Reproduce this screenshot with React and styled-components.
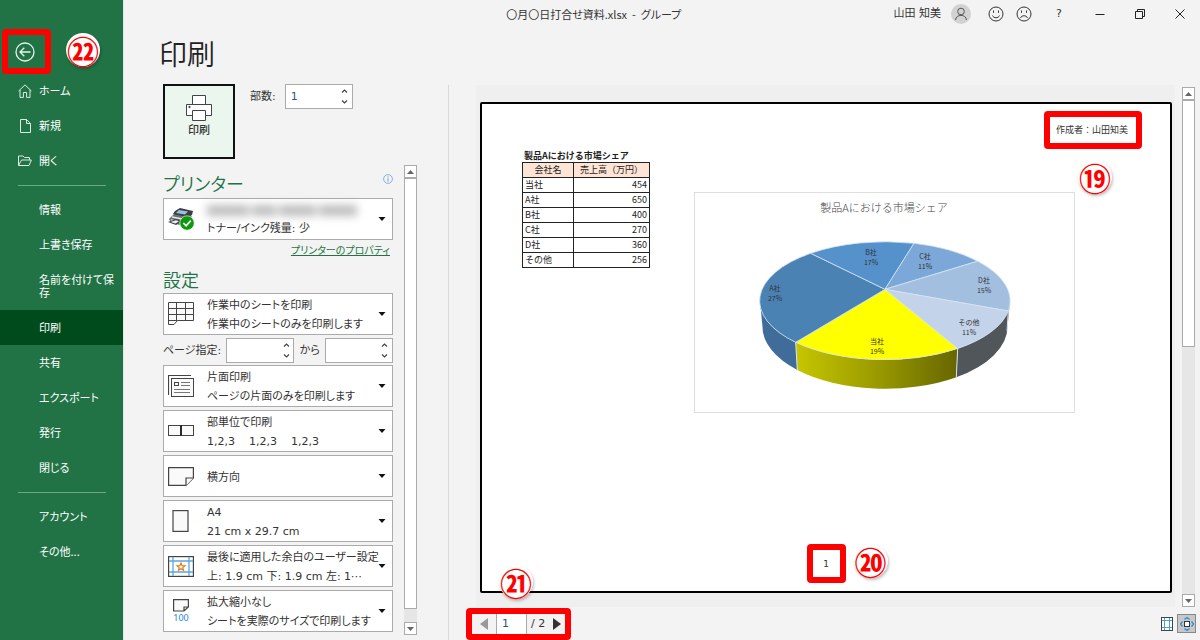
import React, { useState } from "react";
import styled, { createGlobalStyle, css } from "styled-components";

const backstageMenu = [
  { label: "情報" },
  { label: "上書き保存" },
  { label: "名前を付けて保存" },
  { label: "印刷", active: true },
  { label: "共有" },
  { label: "エクスポート" },
  { label: "発行" },
  { label: "閉じる" }
];

const sales = [
  { name: "当社", amount: 454 },
  { name: "A社", amount: 650 },
  { name: "B社", amount: 400 },
  { name: "C社", amount: 270 },
  { name: "D社", amount: 360 },
  { name: "その他", amount: 256 }
];

const slices = [
  { name: "当社", rate: "19%", fill: "#ffff00", from: [263.7, 156.5], to: [101.7, 150.3], x: 183, y: 152 },
  { name: "A社", rate: "27%", fill: "#4a82b4", from: [101.7, 150.3], to: [116.7, 61.3], x: 81, y: 99 },
  { name: "B社", rate: "17%", fill: "#5592cc", from: [116.7, 61.3], to: [220, 51.3], x: 177, y: 63 },
  { name: "C社", rate: "11%", fill: "#7ba7d9", from: [220, 51.3], to: [283.7, 69.2], x: 231, y: 67 },
  { name: "D社", rate: "15%", fill: "#a2bfe0", from: [283.7, 69.2], to: [314.3, 119], x: 290, y: 91 },
  { name: "その他", rate: "11%", fill: "#c3d3ea", from: [314.3, 119], to: [263.7, 156.5], x: 275, y: 133 }
];

function PieChart() {
  return (
    <StyledChart viewBox="0 0 381 221" role="img" aria-label="製品Aにおける市場シェア">
      <defs>
        <linearGradient id="wallYellow" x1="0" x2="1" y1="0" y2="0">
          <stop offset="0" stopColor="#c6c600" />
          <stop offset="0.5" stopColor="#9a9a00" />
          <stop offset="1" stopColor="#666600" />
        </linearGradient>
      </defs>
      <rect x="0.5" y="0.5" width="380" height="220" fill="#fff" stroke="#dedede" />
      <text x="190" y="20" fontSize="11" fontWeight="300" textAnchor="middle" fill="#444">
        製品Aにおける市場シェア
      </text>
      <path
        d="M66 108.7 A125 59 0 0 0 101.7 150.3 L103.3 178 A122.5 62 0 0 1 68.5 134.8 Z"
        fill="#3f6c99"
      />
      <path
        d="M101.7 150.3 A125 59 0 0 0 263.7 156.5 L262.3 185.2 A122.5 62 0 0 1 103.3 178 Z"
        fill="url(#wallYellow)"
      />
      <path
        d="M263.7 156.5 A125 59 0 0 0 316 108.7 L313.5 134.8 A122.5 62 0 0 1 262.3 185.2 Z"
        fill="#51565a"
      />
      <path d="M101.7 150.3 L103.3 178 M263.7 156.5 L262.3 185.2 M314.3 119 L313 139" stroke="#d5e3f3" fill="none" />
      {slices.map((s) => (
        <path
          key={s.name}
          d={`M191 97.3 L${s.from[0]} ${s.from[1]} A125 59 0 0 1 ${s.to[0]} ${s.to[1]} Z`}
          fill={s.fill}
          stroke="#d5e3f3"
          strokeWidth="0.8"
          strokeLinejoin="round"
        />
      ))}
      {slices.map((s) => (
        <g key={s.name} fontSize="7" fill="#333" textAnchor="middle">
          <text x={s.x} y={s.y}>{s.name}</text>
          <text x={s.x} y={s.y + 10}>{s.rate}</text>
        </g>
      ))}
    </StyledChart>
  );
}

function Spinner({ id, value, onChange, label }) {
  return (
    <StyledSpinner>
      <input
        type="text"
        inputMode="numeric"
        id={id}
        aria-label={label}
        value={value}
        onChange={(e) => onChange(e.target.value)}
      />
      <div>
        <button aria-label="増やす" onClick={() => onChange(String(Number(value) + 1))}>
          <svg width="7" height="4" viewBox="0 0 7 4">
            <path d="M1 3.5 L3.5 1 L6 3.5" fill="none" stroke="#444" strokeWidth="1.2" />
          </svg>
        </button>
        <button aria-label="減らす" onClick={() => onChange(String(Math.max(1, Number(value) - 1)))}>
          <svg width="7" height="4" viewBox="0 0 7 4">
            <path d="M1 0.5 L3.5 3 L6 0.5" fill="none" stroke="#444" strokeWidth="1.2" />
          </svg>
        </button>
      </div>
    </StyledSpinner>
  );
}

function Combo({ label, icon, title, detail }) {
  return (
    <StyledCombo>
      <ComboIcon>{icon}</ComboIcon>
      <ComboText>
        <span>{title}</span>
        {detail && <span>{detail}</span>}
      </ComboText>
      <svg width="8" height="4" viewBox="0 0 8 4">
        <path d="M0.5 0 H7.5 L4 4 Z" fill="#111" />
      </svg>
      <select aria-label={label}>
        <option>{typeof title === "string" ? title : label}</option>
      </select>
    </StyledCombo>
  );
}

function Scrollbar({ thumb }) {
  return (
    <StyledScrollbar>
      <button aria-label="上へ">
        <svg width="7" height="4" viewBox="0 0 7 4">
          <path d="M0 4 H7 L3.5 0 Z" fill="#666" />
        </svg>
      </button>
      <ScrollTrack>
        <ScrollThumb $size={thumb} />
      </ScrollTrack>
      <button aria-label="下へ">
        <svg width="7" height="4" viewBox="0 0 7 4">
          <path d="M0 0 H7 L3.5 4 Z" fill="#666" />
        </svg>
      </button>
    </StyledScrollbar>
  );
}

const iconPrinterStatus = (
  <svg width="28" height="24" viewBox="0 0 28 24">
    <path d="M1 12 L8 5 L23 8 L25 14 L17 19 L3 16 Z" fill="#6b7075" />
    <path d="M7 4 L12 1 L25 4 L24 8 L19 10 L5 7 Z" fill="#3a3f44" />
    <path d="M11 3 L20 4.500 L17 7.500 L8 6 Z" fill="#9cc0dc" />
    <path d="M4 10 L17 12.500 M3 13 L13 15.500" stroke="#e8e8e8" strokeWidth="1.500" />
    <path d="M0 15 L8 12 L14 14 L8 18 Z" fill="#444" />
    <path d="M2.500 15 L8 13.300 L11 14.300 L7.500 16.400 Z" fill="#eee" />
    <circle cx="19" cy="16" r="7.200" fill="#0c9a0c" stroke="#fff" strokeWidth="0.600" />
    <path d="M15.300 16 L18.100 18.800 L22.800 13.700" fill="none" stroke="#fff" strokeWidth="1.700" />
  </svg>
);

const iconSheet = (
  <svg width="26" height="24" viewBox="0 0 26 24" fill="none" stroke="#444">
    <path d="M9.5 18.500 H25.500 V0.500 H0.500 V22.500 H6 L9.500 18.500 H0.500" fill="#fafafa" />
    <path d="M0.500 6.500 H25.500 M0.500 12.500 H25.500 M8.500 0.500 V18.500 M17.500 0.500 V18.500" />
  </svg>
);

const iconOneSided = (
  <svg width="26" height="22" viewBox="0 0 26 22" fill="none" stroke="#444">
    <path d="M0.500 20 V0.500 H23" strokeWidth="1.200" />
    <rect x="3.500" y="3.500" width="22" height="18" fill="#fafafa" />
    <rect x="6.500" y="7.500" width="4" height="3" />
    <path d="M13 7.500 H22 M13 10.500 H22 M6 14.500 H22 M6 17.500 H22" stroke="#777" />
  </svg>
);

const iconCollate = (
  <svg width="26" height="12" viewBox="0 0 26 12" fill="#fafafa" stroke="#444">
    <rect x="0.500" y="0.500" width="12" height="10" />
    <rect x="13.500" y="0.500" width="12" height="10" />
    <path d="M13 0 V11" stroke="#111" />
  </svg>
);

const iconLandscape = (
  <svg width="26" height="19" viewBox="0 0 26 19" fill="#fafafa" stroke="#444" strokeWidth="1.200">
    <path d="M0.600 0.600 H25.400 V11 L18 18.400 H0.600 Z" />
    <path d="M18 18.400 V11 H25.400" />
  </svg>
);

const iconPaper = (
  <svg width="26" height="22" viewBox="0 0 26 22" fill="#fafafa" stroke="#444" strokeWidth="1.200">
    <rect x="5" y="0.600" width="15" height="20.800" />
  </svg>
);

const iconMargins = (
  <svg width="26" height="21" viewBox="0 0 26 21" fill="none">
    <rect x="0.600" y="0.600" width="24.800" height="19.800" fill="#fff" stroke="#444" strokeWidth="1.200" />
    <path d="M5 1 V20 M21 1 V20 M1 5 H25 M1 16 H25" stroke="#5aa7e0" strokeWidth="1.300" />
    <path
      d="M13 7 L14.100 9.700 L17 9.800 L14.800 11.600 L15.500 14.300 L13 12.800 L10.500 14.300 L11.200 11.600 L9 9.800 L11.900 9.700 Z"
      stroke="#e07b1a"
      strokeWidth="1.200"
    />
  </svg>
);

const iconScale = (
  <svg width="26" height="24" viewBox="0 0 26 24" fill="none">
    <path d="M5.600 0.600 H20.400 V8 L16 12 H5.600 Z M16 12 V8 H20.400" fill="#fafafa" stroke="#444" strokeWidth="1.200" />
    <text x="13" y="22" fontSize="9" fontFamily="Noto Sans" textAnchor="middle" fill="#1f86cf">100</text>
  </svg>
);

export default function App() {
  const [copies, setCopies] = useState("1");
  const [pageFrom, setPageFrom] = useState("");
  const [pageTo, setPageTo] = useState("");
  const [page, setPage] = useState("1");

  return (
    <>
      <GlobalStyle />
      <StyledApp>
        <Sidebar>
          <BackArea>
            <Mark>
              <BackButton aria-label="戻る">
                <svg width="20" height="20" viewBox="0 0 20 20" fill="none" stroke="#e8f3ec" strokeWidth="1.300">
                  <circle cx="10" cy="10" r="9" />
                  <path d="M15.500 10 H5 M9.300 5.700 L5 10 L9.300 14.300" />
                </svg>
              </BackButton>
            </Mark>
            <NumberBadge $left={66} $top={33}>㉒</NumberBadge>
          </BackArea>
          <NavItem href="#home" $icon>
            <svg width="14" height="14" viewBox="0 0 14 14" fill="none" stroke="#dcece2">
              <path d="M0.600 7 L7 0.900 L13.400 7 M2 6 V13.400 H5.400 V8.500 H8.600 V13.400 H12 V6" />
            </svg>
            ホーム
          </NavItem>
          <NavItem href="#new" $icon>
            <svg width="14" height="16" viewBox="0 0 14 16" fill="none" stroke="#dcece2">
              <path d="M2.500 1.500 H8.500 L12.500 5.500 V14.500 H2.500 Z M8.500 1.500 V5.500 H12.500" />
            </svg>
            新規
          </NavItem>
          <NavItem href="#open" $icon>
            <svg width="14" height="12" viewBox="0 0 14 12" fill="none" stroke="#dcece2">
              <path d="M0.500 10.500 V1 H5 L6.500 2.500 H11.500 V5 M0.500 10.500 L3.500 5 H13.400 L11 10.500 Z" />
            </svg>
            開く
          </NavItem>
          <NavDivider />
          {backstageMenu.map((item) => (
            <NavItem key={item.label} href="#menu" $active={item.active}>
              {item.label}
            </NavItem>
          ))}
          <NavDivider />
          <NavItem href="#account">アカウント</NavItem>
          <NavItem href="#more">その他...</NavItem>
        </Sidebar>

        <Main>
          <TitleBar>
            <FileName>〇月〇日打合せ資料.xlsx&nbsp; -&nbsp; グループ</FileName>
            <UserArea>
              山田 知美
              <svg width="20" height="20" viewBox="0 0 20 20" fill="none" stroke="#555">
                <circle cx="10" cy="10" r="10" fill="#d2d2d2" stroke="none" />
                <circle cx="10" cy="7.500" r="3.300" />
                <path d="M4.500 16 C5 9.800 15 9.800 15.500 16" />
              </svg>
            </UserArea>
            <WindowButtons>
              <button aria-label="笑顔">
                <svg width="16" height="16" viewBox="0 0 16 16" fill="none" stroke="#333">
                  <circle cx="8" cy="8" r="7" />
                  <path d="M4.500 9.500 C5.500 12.500 10.500 12.500 11.500 9.500 M5.500 4.500 V6.800 M10.500 4.500 V6.800" />
                </svg>
              </button>
              <button aria-label="不満">
                <svg width="16" height="16" viewBox="0 0 16 16" fill="none" stroke="#333">
                  <circle cx="8" cy="8" r="7" />
                  <path d="M4.500 12 C5.500 9 10.500 9 11.500 12 M5.500 4.500 V6.800 M10.500 4.500 V6.800" />
                </svg>
              </button>
              <WideButton $help>?</WideButton>
              <WideButton aria-label="最小化">
                <svg width="10" height="10" viewBox="0 0 10 10">
                  <path d="M0.500 5.500 H9.500" stroke="#222" />
                </svg>
              </WideButton>
              <WideButton aria-label="元に戻す">
                <svg width="10" height="10" viewBox="0 0 10 10" fill="none" stroke="#222">
                  <path d="M0.500 2.500 H7.500 V9.500 H0.500 Z M2.500 2.500 V0.500 H9.500 V7.500 H7.500" />
                </svg>
              </WideButton>
              <WideButton aria-label="閉じる">
                <svg width="10" height="10" viewBox="0 0 10 10">
                  <path d="M0.500 0.500 L9.500 9.500 M9.500 0.500 L0.500 9.500" stroke="#222" />
                </svg>
              </WideButton>
            </WindowButtons>
          </TitleBar>

          <Workspace>
            <SettingsPane>
              <h1>印刷</h1>
              <PrintRow>
                <PrintButton>
                  <svg width="26" height="26" viewBox="0 0 26 26" fill="#fff" stroke="#444">
                    <path d="M6.500 9.500 V0.500 H19.500 V9.500" />
                    <path d="M0.500 9.500 H25.500 V20.500 H0.500 Z" />
                    <path d="M6.500 15.500 H19.500 V25.500 H6.500 Z" />
                    <circle cx="3.500" cy="12" r="0.700" fill="#111" />
                  </svg>
                  印刷
                </PrintButton>
                <label htmlFor="copies">部数:</label>
                <Spinner id="copies" value={copies} onChange={setCopies} />
              </PrintRow>

              <ScrollRow>
                <Settings>
                  <SectionTitle>
                    プリンター
                    <svg width="10" height="10" viewBox="0 0 10 10" fill="none" stroke="#6f9fd0">
                      <circle cx="5" cy="5" r="4.400" strokeWidth="0.800" />
                      <path d="M5 4.300 V7.600 M5 2.300 V3.400" />
                    </svg>
                  </SectionTitle>
                  <Combo
                    label="プリンター"
                    icon={iconPrinterStatus}
                    title={
                      <HiddenName>
                        <i />
                        <i />
                        <i />
                        <i />
                      </HiddenName>
                    }
                    detail="トナー/インク残量: 少"
                  />
                  <PropertyLink href="#printer">プリンターのプロパティ</PropertyLink>
                  <SectionTitle $compact>設定</SectionTitle>
                  <Combo
                    label="印刷対象"
                    icon={iconSheet}
                    title="作業中のシートを印刷"
                    detail="作業中のシートのみを印刷します"
                  />
                  <PageRange>
                    <label htmlFor="pageFrom">ページ指定:</label>
                    <Spinner id="pageFrom" value={pageFrom} onChange={setPageFrom} />
                    <label htmlFor="pageTo">から</label>
                    <Spinner id="pageTo" value={pageTo} onChange={setPageTo} />
                  </PageRange>
                  <ComboList>
                    <Combo
                      label="片面/両面"
                      icon={iconOneSided}
                      title="片面印刷"
                      detail="ページの片面のみを印刷します"
                    />
                    <Combo
                      label="印刷単位"
                      icon={iconCollate}
                      title="部単位で印刷"
                      detail={"1,2,3\u00a0\u00a0\u00a0 1,2,3\u00a0\u00a0\u00a0 1,2,3"}
                    />
                    <Combo label="向き" icon={iconLandscape} title="横方向" />
                    <Combo label="用紙" icon={iconPaper} title="A4" detail="21 cm x 29.7 cm" />
                    <Combo
                      label="余白"
                      icon={iconMargins}
                      title="最後に適用した余白のユーザー設定"
                      detail="上: 1.9 cm 下: 1.9 cm 左: 1⋯"
                    />
                    <Combo
                      label="拡大縮小"
                      icon={iconScale}
                      title="拡大縮小なし"
                      detail="シートを実際のサイズで印刷します"
                    />
                  </ComboList>
                </Settings>
                <Scrollbar thumb="97%" />
              </ScrollRow>
            </SettingsPane>

            <PreviewPane>
              <PreviewRow>
                <Canvas>
                  <Paper>
                    <PaperHeader>
                      <Mark $author>
                        作成者：山田知美
                        <NumberBadge $left={28} $top={43}>⑲</NumberBadge>
                      </Mark>
                    </PaperHeader>
                    <PaperBody>
                      <SalesTable>
                        <caption>製品Aにおける市場シェア</caption>
                        <thead>
                          <tr>
                            <th>会社名</th>
                            <th>売上高（万円）</th>
                          </tr>
                        </thead>
                        <tbody>
                          {sales.map((row) => (
                            <tr key={row.name}>
                              <td>{row.name}</td>
                              <td>{row.amount}</td>
                            </tr>
                          ))}
                        </tbody>
                      </SalesTable>
                      <PieChart />
                    </PaperBody>
                    <PaperFooter>
                      <Mark $pageNumber>
                        1
                        <NumberBadge $left={41} $top={-6}>⑳</NumberBadge>
                      </Mark>
                    </PaperFooter>
                  </Paper>
                </Canvas>
                <Scrollbar thumb="50%" />
              </PreviewRow>
              <PreviewFooter>
                <Mark $pager>
                  <button aria-label="前のページ" onClick={() => setPage("1")}>
                    <svg width="8" height="12" viewBox="0 0 8 12">
                      <path d="M8 0 V12 L0 6 Z" fill="#999" />
                    </svg>
                  </button>
                  <input aria-label="ページ" value={page} onChange={(e) => setPage(e.target.value)} />
                  <span>/ 2</span>
                  <button aria-label="次のページ" onClick={() => setPage("2")}>
                    <svg width="8" height="12" viewBox="0 0 8 12">
                      <path d="M0 0 V12 L8 6 Z" fill="#333" />
                    </svg>
                  </button>
                  <NumberBadge as="strong" $left={27} $top={-49}>㉑</NumberBadge>
                </Mark>
                <ViewButtons>
                  <ViewButton aria-label="余白の表示">
                    <svg width="12" height="14" viewBox="0 0 12 14" fill="none">
                      <rect x="0.500" y="0.500" width="11" height="13" fill="#fff" stroke="#444" />
                      <path d="M3.500 1 V13 M8.500 1 V13 M1 3.500 H11 M1 10.500 H11" stroke="#4b9fdc" />
                    </svg>
                  </ViewButton>
                  <ViewButton aria-label="ページに合わせる" $pressed>
                    <svg width="14" height="14" viewBox="0 0 14 14">
                      <rect x="4.500" y="4.500" width="5" height="5" fill="#fff" stroke="#333" />
                      <path
                        d="M4.500 2.500 L7 0.500 L9.500 2.500 M4.500 11.500 L7 13.500 L9.500 11.500 M2.500 4.500 L0.500 7 L2.500 9.500 M11.500 4.500 L13.500 7 L11.500 9.500"
                        fill="none"
                        stroke="#2f8fd6"
                        strokeWidth="1.400"
                      />
                    </svg>
                  </ViewButton>
                </ViewButtons>
              </PreviewFooter>
            </PreviewPane>
          </Workspace>
        </Main>
      </StyledApp>
    </>
  );
}

const GlobalStyle = createGlobalStyle`
  * {
    box-sizing: border-box;
  }
  body {
    margin: 0;
    font-family: "DejaVu Sans", "Noto Sans CJK JP", sans-serif;
    font-size: 11px;
    line-height: 14px;
    font-feature-settings: "palt";
    color: #333;
  }
  button,
  input,
  select {
    font: inherit;
    font-feature-settings: inherit;
    color: inherit;
  }
  button {
    padding: 0;
    border: 0;
    background: none;
  }
  svg {
    display: block;
    flex-shrink: 0;
  }
`;

const StyledApp = styled.div`
  display: flex;
  min-height: 100vh;
  background: #f3f3f3;
`;

const Sidebar = styled.nav`
  flex: 0 0 124px;
  background: #217346;
  border-right: 1px solid #dfe9e3;
`;

const BackArea = styled.div`
  position: relative;
  padding: 29px 0 0 2px;
  height: 73px;
`;

const NavItem = styled.a`
  display: flex;
  align-items: center;
  min-height: 35px;
  padding: 11px 8px 11px 39px;
  line-height: 13px;
  font-family: "Noto Sans CJK JP", sans-serif;
  color: #fff;
  text-decoration: none;
  background: ${(p) => (p.$active ? "#004b1c" : "none")};
  ${(p) =>
    p.$icon &&
    css`
      gap: 7px;
      height: 35px;
      padding: 0 8px 0 18px;
    `}
`;

const NavDivider = styled.hr`
  height: 1px;
  margin: 7px 17px 6px 18px;
  border: 0;
  background: #6fa587;
`;

/* red frame drawn around the part being explained */
const Mark = styled.div`
  position: relative;
  display: inline-flex;
  align-items: center;
  justify-content: center;
  border: 6px solid #ff0000;
  border-radius: 4px;
  ${(p) =>
    p.$author &&
    css`
      height: 38px;
      padding: 0 8px 0 6px;
      font-size: 9px;
      font-feature-settings: normal;
    `}
  ${(p) =>
    p.$pageNumber &&
    css`
      width: 39px;
      height: 39px;
      font-size: 9px;
    `}
  ${(p) =>
    p.$pager &&
    css`
      align-items: stretch;
      height: 32px;
      padding: 0 2px 0 8px;
      button {
        width: 10px;
        display: flex;
        align-items: center;
      }
      input {
        width: 31px;
        margin-left: 6px;
        padding: 0 5px;
        border: 1px solid #aaa;
        border-width: 0 1px;
        color: #2b5580;
        background: #fff;
      }
      span {
        align-self: center;
        width: 22px;
        margin-right: 4px;
        padding-left: 4px;
      }
    `}
`;

const BackButton = styled.button`
  display: flex;
  align-items: center;
  justify-content: center;
  width: 37px;
  height: 33px;
  padding-right: 4px;
`;

const NumberBadge = styled.strong`
  position: absolute;
  left: ${(p) => p.$left}px;
  top: ${(p) => p.$top}px;
  display: flex;
  align-items: center;
  justify-content: center;
  width: 34px;
  height: 34px;
  border-radius: 50%;
  background: #fff;
  box-shadow: 1px 2px 3px rgba(0, 0, 0, 0.25);
  font-family: "Noto Sans CJK JP", sans-serif;
  font-size: 32px;
  font-weight: 700;
  line-height: 34px;
  font-feature-settings: normal;
  color: #ff0000;
`;

const Main = styled.main`
  flex: 1;
  min-width: 0;
  display: flex;
  flex-direction: column;
`;

const TitleBar = styled.header`
  display: grid;
  grid-template-columns: 1fr auto auto;
  align-items: center;
  height: 28px;
`;

const FileName = styled.div`
  padding-left: 170px;
  font-family: "Noto Sans CJK JP", sans-serif;
  text-align: center;
`;

const UserArea = styled.div`
  display: flex;
  align-items: center;
  gap: 10px;
  margin-right: 11px;
`;

const WindowButtons = styled.div`
  display: flex;
  align-items: center;
  button {
    display: flex;
    align-items: center;
    justify-content: center;
    width: 28px;
    height: 28px;
  }
`;

const WideButton = styled.button`
  && {
    width: ${(p) => (p.$help ? 42 : 40)}px;
  }
`;

const Workspace = styled.div`
  flex: 1;
  display: flex;
`;

const SettingsPane = styled.section`
  flex: 0 0 324px;
  display: flex;
  flex-direction: column;
  padding: 8px 0 5px 39px;
  h1 {
    margin: 0 0 14px -4px;
    font-family: "Noto Sans CJK JP", sans-serif;
    font-size: 28px;
    font-weight: 350;
    line-height: 34px;
    color: #222;
  }
`;

const PrintRow = styled.div`
  display: flex;
  align-items: flex-start;
  margin-bottom: 6px;
  label {
    margin: 6px 9px 0 15px;
  }
`;

const PrintButton = styled.button`
  display: flex;
  flex-direction: column;
  align-items: center;
  gap: 3px;
  width: 72px;
  height: 75px;
  padding-top: 9px;
  border: 2px solid #111;
  background: #eaf6ee;
  font-weight: 500;
`;

const StyledSpinner = styled.div`
  display: flex;
  width: 68px;
  height: 25px;
  border: 1px solid #ababab;
  background: #fff;
  input {
    flex: 1;
    min-width: 0;
    padding: 1px 5px 0;
    border: 0;
    background: none;
    color: #2b5580;
  }
  div {
    display: flex;
    flex-direction: column;
    width: 14px;
  }
  button {
    flex: 1;
    display: flex;
    align-items: center;
    justify-content: center;
  }
`;

const ScrollRow = styled.div`
  flex: 1;
  display: flex;
  gap: 11px;
`;

const Settings = styled.div`
  width: 230px;
`;

const SectionTitle = styled.h2`
  display: flex;
  align-items: center;
  justify-content: space-between;
  height: ${(p) => (p.$compact ? 28 : 26)}px;
  margin: 7px 0 0;
  padding-bottom: ${(p) => (p.$compact ? 0 : 4)}px;
  font-family: "Noto Sans CJK JP", sans-serif;
  font-size: 18px;
  font-weight: 350;
  line-height: 24px;
  color: #217346;
  svg {
    margin-bottom: 8px;
  }
`;

const StyledCombo = styled.div`
  position: relative;
  display: flex;
  align-items: center;
  height: 42px;
  padding: 0 6px 0 4px;
  border: 1px solid #ababab;
  background: #fff;
  select {
    position: absolute;
    inset: 0;
    width: 100%;
    opacity: 0;
  }
`;

const ComboIcon = styled.span`
  display: flex;
  flex: 0 0 28px;
`;

const ComboText = styled.span`
  flex: 1;
  min-width: 0;
  display: flex;
  flex-direction: column;
  padding: 2px 0 0 11px;
  line-height: 19px;
  white-space: nowrap;
`;

const HiddenName = styled.span`
  display: flex;
  align-items: center;
  gap: 3px;
  height: 17px;
  filter: blur(4px);
  i {
    width: 42px;
    height: 11px;
    background: #bdbdbd;
  }
  i:nth-child(2) {
    width: 24px;
  }
  i:nth-child(3) {
    width: 37px;
  }
  i:nth-child(4) {
    width: 38px;
  }
`;

const PropertyLink = styled.a`
  display: block;
  margin-top: 4px;
  padding-right: 3px;
  text-align: right;
  font-size: 10px;
  line-height: 14px;
  color: #217346;
`;

const PageRange = styled.div`
  display: flex;
  align-items: center;
  justify-content: space-between;
  margin: 3px 0 2px;
`;

const ComboList = styled.div`
  display: grid;
  grid-template-columns: minmax(0, 1fr);
  gap: 3px;
`;

const StyledScrollbar = styled.div`
  display: flex;
  flex-direction: column;
  flex: 0 0 13px;
  button {
    display: flex;
    align-items: center;
    justify-content: center;
    height: 13px;
    border: 1px solid #ababab;
    background: #fff;
  }
`;

const ScrollTrack = styled.div`
  flex: 1;
  background: #e6e6e6;
`;

const ScrollThumb = styled.div`
  height: ${(p) => p.$size};
  border: 1px solid #ababab;
  background: #fff;
`;

const PreviewPane = styled.section`
  flex: 1;
  min-width: 0;
  display: flex;
  flex-direction: column;
  margin-top: 57px;
  border-left: 1px solid #d9d9d9;
`;

const PreviewRow = styled.div`
  flex: 1;
  display: flex;
  gap: 7px;
  padding: 0 5px 0 27px;
  ${StyledScrollbar} {
    margin-top: 2px;
  }
`;

const Canvas = styled.div`
  flex: 1;
  display: flex;
  padding: 17px 3px 14px 4px;
  background: #efefef;
`;

const Paper = styled.article`
  flex: 1;
  display: flex;
  flex-direction: column;
  border: 2px solid #000;
  border-radius: 2px;
  background: #fff;
`;

const PaperHeader = styled.div`
  display: flex;
  justify-content: flex-end;
  padding: 7px 28px 0;
`;

const PaperBody = styled.div`
  flex: 1;
  display: flex;
  align-items: flex-start;
  gap: 44px;
  padding-left: 40px;
`;

const SalesTable = styled.table`
  flex: 0 0 128px;
  width: 128px;
  border-collapse: collapse;
  font-family: "Noto Sans CJK JP", sans-serif;
  font-size: 9px;
  line-height: 14px;
  font-feature-settings: normal;
  color: #222;
  caption {
    padding-left: 2px;
    line-height: 13px;
    font-weight: 700;
    text-align: left;
    white-space: nowrap;
  }
  th,
  td {
    height: 15px;
    padding: 0 2px;
    border: 1px solid #222;
  }
  th {
    font-weight: 400;
    background: #fde4d5;
    white-space: nowrap;
  }
  th:first-child {
    width: 51px;
  }
  td:last-child {
    text-align: right;
  }
`;

const StyledChart = styled.svg`
  flex: 0 1 381px;
  min-width: 0;
  margin-top: 43px;
  font-family: "Noto Sans CJK JP", sans-serif;
  font-feature-settings: normal;
`;

const PaperFooter = styled.div`
  display: flex;
  justify-content: center;
  padding-bottom: 8px;
`;

const PreviewFooter = styled.footer`
  display: flex;
  align-items: center;
  justify-content: space-between;
  height: 33px;
  padding: 0 4px 0 17px;
`;

const ViewButtons = styled.div`
  display: flex;
  gap: 1px;
`;

const ViewButton = styled.button`
  display: flex;
  align-items: center;
  justify-content: center;
  width: 19px;
  height: 19px;
  ${(p) =>
    p.$pressed &&
    css`
      border: 1px solid #888;
      background: #c8c8c8;
    `}
`;
